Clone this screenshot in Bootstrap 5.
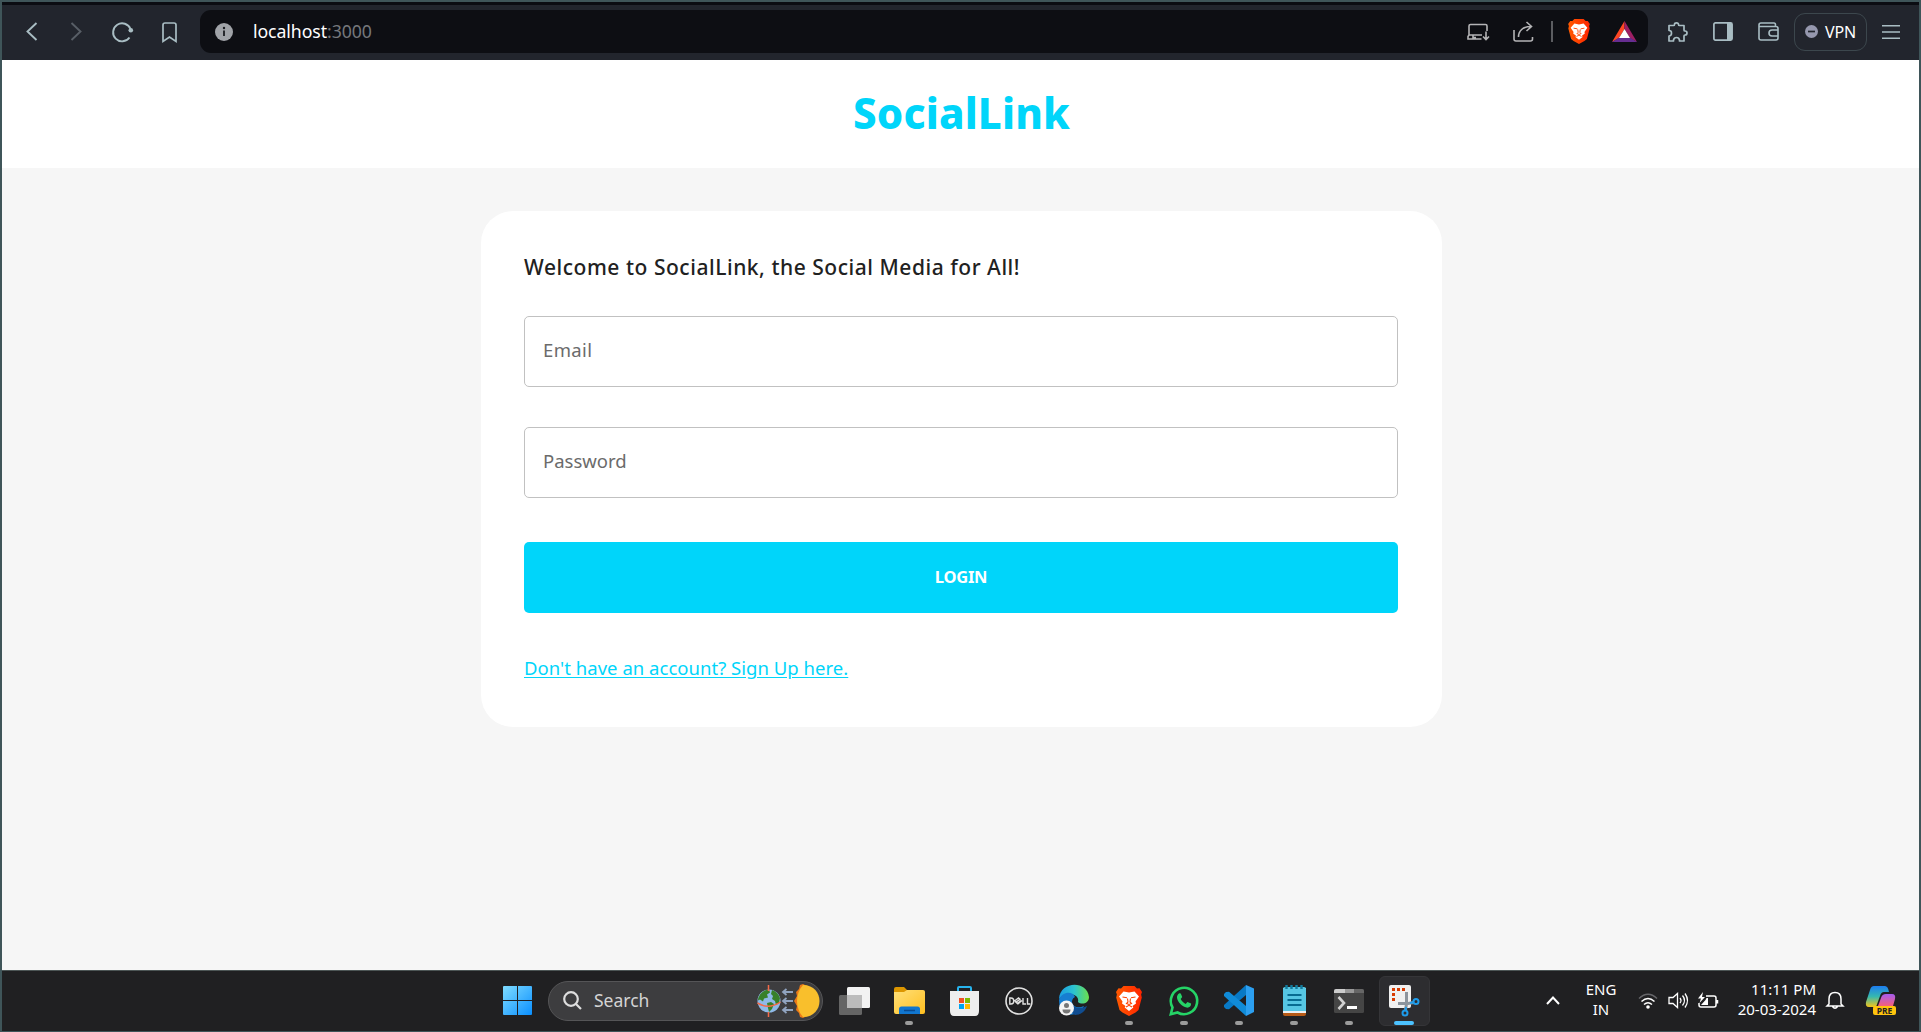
<!DOCTYPE html>
<html lang="en">
<head>
<meta charset="utf-8">
<meta name="viewport" content="width=device-width, initial-scale=1">
<title>SocialLink</title>
<link href="https://cdn.jsdelivr.net/npm/bootstrap@5.3.0/dist/css/bootstrap.min.css" rel="stylesheet">
<style>
html,body{height:100%;overflow:hidden}
body{font-family:"Noto Sans","Open Sans",sans-serif;border:2px solid #3f5559;border-bottom-width:1px;background:#f6f6f6}
svg{display:block;flex:none;overflow:visible}
.toolbar{height:58px;border-top:3px solid #0b0c12;background:#22252d;padding:0 0 2px 15px}
.tool{width:46px;height:44px;display:flex;align-items:center;justify-content:center;flex:none}
.omni{width:1448px;height:43px;margin-left:-1px;background:#0d0e13;border-radius:11px;padding:0 1px 0 15px}
.url{font-size:17.7px;letter-spacing:-.08px;margin-left:20px;color:#fff;line-height:1}
.url span{color:#75777c}
.vpn{width:73px;height:38px;border:1px solid #3c474d;border-radius:11px;color:#fff;font-size:16px;gap:7px;margin-left:3px;letter-spacing:-.2px}
.brandbar{height:108px}
.brandname{font-size:42px;font-weight:800;color:#00d5fa;line-height:1;letter-spacing:.15px;padding:0 0 2px 2px}
.page{padding-left:2px}
.panel{width:961px;height:516px;margin-top:43px;border-radius:32px;padding:0 44px 0 43px}
.panel h1{font-size:21px;font-weight:500;color:#212121;line-height:28px;margin:42px 0 35px;letter-spacing:.54px}
.form-control.fieldbox{height:71px;border:1px solid #c1c1c1;border-radius:5px;padding:0 18px 4px;font-size:18.5px}
.fieldbox::placeholder{color:#6b6b6b}
.fieldbox.mailbox{letter-spacing:.35px}
.fieldbox.pw{margin-top:40px}
.btn.login{height:71px;margin-top:44px;background:#00d5fa;color:#fff;border:0;border-radius:5px;font-size:16.5px;font-weight:700;letter-spacing:-.25px}
.signup{color:#00d5fa;font-size:18.5px;line-height:26px;margin-top:42px;text-underline-offset:2px;letter-spacing:.03px}
.taskbar{height:61px;border-top:1px solid #4c5555;background:#202022;color:#fff;padding-bottom:1px}
.search{width:275px;height:40px;border-radius:20px;background:#3d3d3f;border:1px solid #555557;font-size:17.5px;color:#d4d4d4;padding:0 3px 0 14px}
.app{width:55px;height:50px;position:relative;display:flex;align-items:center;justify-content:center;flex:none}
.running::after{content:"";position:absolute;bottom:1px;left:23.5px;width:8px;height:4px;border-radius:2px;background:#9b9b9b}
.current::before{content:"";position:absolute;inset:0 2px;border:1px solid #353538;border-radius:6px;background:#2d2d30}
.current svg{position:relative}
.current::after{left:17.5px;width:20px;background:#4cc2ff}
.tray{font-size:15px;line-height:20px}
.traytext{padding-bottom:3px}
</style>
</head>
<body class="d-flex flex-column">
<svg width="0" height="0" class="position-absolute"><defs>
<linearGradient id="win" x2="1" y2="1"><stop stop-color="#7fdcff"/><stop offset="1" stop-color="#0a8fff"/></linearGradient>
<linearGradient id="brv"><stop stop-color="#ff5a00"/><stop offset="1" stop-color="#ff2400"/></linearGradient>
<linearGradient id="edg"><stop stop-color="#1b9de2"/><stop offset=".5" stop-color="#2cc3d0"/><stop offset="1" stop-color="#6be04c"/></linearGradient>
<linearGradient id="cop" x2="0" y2="1"><stop stop-color="#1d7df0"/><stop offset=".5" stop-color="#35b8b0"/><stop offset="1" stop-color="#f5c518"/></linearGradient>
<linearGradient id="cop2" x2="0" y2="1"><stop stop-color="#a45cf0"/><stop offset="1" stop-color="#f5607a"/></linearGradient>
<linearGradient id="fold" x2="1" y2="1"><stop stop-color="#ffe07a"/><stop offset="1" stop-color="#ffbf1f"/></linearGradient>
<symbol id="lion" viewBox="0 0 26 30"><path d="M5 2.500 7.500 0h11L21 2.500l2.500-.2L26 6l-.9 2.500.7 3L22.500 24l-3 2.500L13 30l-6.500-3.500-3-2.500L.2 11.500l.7-3L0 6l2.500-3.700z" fill="url(#brv)"/><path d="M7.500 5.500l5.500 1 5.500-1L23 10.500l-3.500 5 .5 2-3.500 2.500.8 1.500L13 25l-4.300-3.500.8-1.500L6 17.500l.5-2-3.500-5z" fill="#fff"/><path d="M6.500 11l4.500.8M19.500 11l-4.500.8M11.500 12.500l.5 3.500-1.500 1.500 2.500 1 2.500-1-1.500-1.500.5-3.500M10 21l3-1.700 3 1.700" fill="none" stroke="#ff4200" stroke-width="1.100"/></symbol>
</defs></svg>

<nav class="toolbar d-flex align-items-center flex-shrink-0">
  <div class="tool" style="width:28px"><svg width="11" height="19" fill="none" stroke="#a9bdc3" stroke-width="1.900"><path d="M10.500 1 1.500 9.500l9 8.500"/></svg></div>
  <div class="tool" style="width:63px"><svg width="11" height="19" fill="none" stroke="#585e66" stroke-width="1.900"><path d="m.5 1 9 8.500-9 8.500"/></svg></div>
  <div class="tool" style="width:30px"><svg width="22" height="20" fill="none" stroke="#a9bdc3" stroke-width="1.900"><path d="M17.500 15.500A9 9 0 1 1 18.500 7"/><circle cx="18.800" cy="8.300" r="2.300" fill="#a9bdc3" stroke="none"/></svg></div>
  <div class="tool" style="width:63px"><svg width="15" height="20" fill="none" stroke="#a9bdc3" stroke-width="1.700"><path d="M3 1h9q2 0 2 2v16.500L7.500 15 1 19.500V3q0-2 2-2z"/></svg></div>
  <div class="omni d-flex align-items-center">
    <svg width="18" height="18"><circle cx="9" cy="9" r="9" fill="#a0a3a8"/><path d="M9 7.500V13" stroke="#191b20" stroke-width="1.800" fill="none"/><circle cx="9" cy="5" r="1.200" fill="#191b20"/></svg>
    <div class="url me-auto">localhost<span>:3000</span></div>
    <div class="tool" style="margin-right:-1px"><svg width="22" height="18" fill="none" stroke="#b4b4b6" stroke-width="1.600"><path d="M15 12H2V3q0-1.500 1.500-1.500h15Q20 1.500 20 3v5M2 12l-1 1.500V16h13.500M6 12.500v2h3M19 8.500V16M16 13.500l3 3 3-3"/></svg></div>
    <div class="tool"><svg width="21" height="21" fill="none" stroke="#b4b4b6" stroke-width="1.600"><path d="M1 9v9q0 2 2 2h14.500q2 0 2-2v-2M5.500 16c0-6 4-10.500 13-10.500M13.500 1 18.500 5.500 13.500 10"/></svg></div>
    <svg width="2" height="21" class="me-1" style="margin-left:5px"><path d="M1 0v21" stroke="#77797d" stroke-width="1.500"/></svg>
    <div class="tool" style="width:44px"><svg width="22" height="25"><use href="#lion"/></svg></div>
    <div class="tool"><svg width="25" height="21"><path d="M12.500 0 0 21l7-4 5.500-9z" fill="#ff4724"/><path d="M12.500 0v8L18 17l7 4z" fill="#9e1f63"/><path d="M0 21h25l-7-4.500H7z" fill="#662d91"/><path d="m12.500 8-5.500 9h11z" fill="#fff"/></svg></div>
  </div>
  <div class="tool" style="margin-left:6px"><svg width="21" height="20" fill="none" stroke="#a9bdc3" stroke-width="1.700" stroke-linejoin="round"><path d="M2 3.500h4.500q1 0 1-1 0-1.700 2-1.700t2 1.700q0 1 1 1H17v4.500q0 1 1 1 2 0 2 2t-2 2q-1 0-1 1V19h-4.500v-1q-.5-2.500-3-2.500t-3 2.500v1H2v-5q2.500 0 2.500-2.800T2 8.500z"/></svg></div>
  <div class="tool" style="width:45px"><svg width="20" height="19"><rect x=".9" y=".9" width="18.200" height="17.200" rx="1.500" fill="none" stroke="#a9bdc3" stroke-width="1.700"/><path d="M14 1h5v17h-5z" fill="#a9bdc3"/></svg></div>
  <div class="tool"><svg width="21" height="19" fill="none" stroke="#a9bdc3" stroke-width="1.600"><path d="M17.500 4.500V3Q17.500 1 16 1H3Q1 1 1 3v13q0 2 2 2h15q2 0 2-2V6.500q0-2-2-2H1M20 8h-6q-3 0-3 3t3 3h6"/></svg></div>
  <div class="vpn d-flex align-items-center justify-content-center"><svg width="13" height="13"><circle cx="6.500" cy="6.500" r="6.500" fill="#9698ae"/><path d="M3 6.500h7" stroke="#22252d" stroke-width="1.700"/></svg><span>VPN</span></div>
  <div class="tool" style="width:48px"><svg width="18" height="14" stroke="#a9bdc3" stroke-width="1.500"><path d="M0 .8h18M0 7h18M0 13.200h18"/></svg></div>
</nav>

<header class="brandbar bg-white d-flex justify-content-center align-items-center flex-shrink-0"><div class="brandname">SocialLink</div></header>

<main class="page flex-grow-1">
  <form class="panel bg-white mx-auto d-flex flex-column">
    <h1><span>Welcome to SocialLink, the Social Media for All!</span></h1>
    <input class="form-control fieldbox mailbox" type="text" placeholder="Email">
    <input class="form-control fieldbox pw" type="password" placeholder="Password">
    <button class="btn login w-100" type="button"><span>LOGIN</span></button>
    <div><a class="signup d-inline-block" href="#">Don't have an account? Sign Up here.</a></div>
  </form>
</main>

<footer class="taskbar d-flex align-items-center flex-shrink-0">
  <svg width="29" height="29" style="margin-left:501px"><path d="M0 1q0-1 1-1h13v14H0zM15 0h13q1 0 1 1v13H15zM0 15h14v14H1q-1 0-1-1zM15 15h14v13q0 1-1 1H15z" fill="url(#win)"/></svg>
  <div class="search d-flex align-items-center" style="margin-left:16px">
    <svg width="19" height="19" fill="none" stroke="#dedede" stroke-width="2.200"><circle cx="8" cy="8" r="6.800"/><path d="m13 13 5 5"/></svg>
    <span class="me-auto" style="margin-left:12px">Search</span>
    <svg width="63" height="34"><circle cx="13" cy="17" r="11.500" fill="#8fb9e8"/><path d="M4 10.500Q8 5.500 13 5.500l1 3-3 2 1 3-4 1-1 3-3-2-2 1q0-3 2-6zM16 6q6 2 8 8l-1 5-3 2-1-4-3-2 1-3-2-2zM11 19l4-1 3 2-2 5-3 3-1-4z" fill="#38802a"/><path d="M1.500 19q11 7 23-1M12.500 1v6M12.500 28v5" stroke="#f46b4a" stroke-width="1.500" fill="none"/><path d="M27 8h10M27 17h10M27 26h10M30.500 5 27 8l3.500 3M30.500 14 27 17l3.500 3M30.500 23 27 26l3.500 3" stroke="#91a4c0" stroke-width="1.800" fill="none"/><path d="m47 0-3 1-1 4-3 3 1 4-3 5 3 5-1 4 3 3 1 4 3 1 4-2V2z" fill="#ec7a17"/><path d="M47 1c22 0 22 32 0 32-8-9-8-23 0-32z" fill="#f9bf2c"/></svg>
  </div>
  <div class="app" style="margin-left:3.500px"><svg width="31" height="28"><rect x="8" y="0" width="23" height="21" rx="1.500" fill="#f2f2f2"/><rect x="0" y="8" width="23" height="20" rx="1.500" fill="#777" fill-opacity=".8"/><path d="M8 8h15v13H8z" fill="#bcbcbc"/></svg></div>
  <div class="app running"><svg width="31" height="27"><path d="M0 2q0-2 2-2h8l4 4h15q2 0 2 2v5H0z" fill="#dc9600"/><path d="M0 5h10l3-2h16q2 0 2 2v20q0 2-2 2H2q-2 0-2-2z" fill="url(#fold)"/><path d="M5 27v-5q0-2.500 2.500-2.500h16Q26 19.500 26 22v5z" fill="#1176cf"/><path d="M10 23.500h11" stroke="#084a91" stroke-width="1.500"/></svg></div>
  <div class="app"><svg width="29" height="30"><path d="M8 6V2q0-1 1-1h11q1 0 1 1v4" stroke="#27b3ed" stroke-width="2" fill="none"/><path d="M0 5h29v20q0 5-4 5H4q-4 0-4-5z" fill="#eee"/><path d="M9 12h5v5H9z" fill="#f25022"/><path d="M15 12h5v5h-5z" fill="#7fba00"/><path d="M9 18h5v5H9z" fill="#00a4ef"/><path d="M15 18h5v5h-5z" fill="#ffb900"/></svg></div>
  <div class="app"><svg width="28" height="28" fill="none" stroke="#e1e1e1"><circle cx="14" cy="14" r="13" stroke-width="1.600"/><path d="M4.800 11v6h1.200q2.800 0 2.800-3T6 11zM9.500 14l4-3 1.500 1.200-4 3 1.500 1.300 3.500-3M10 14l3 2.800 4-3.300M18 11v6h3M22.500 11v6h2.800" stroke-width="1.400"/></svg></div>
  <div class="app"><svg width="30" height="31"><path d="M0 14C1-4 28-5 30 12c0 7-8 8-11 5 2-8-11-11-19-3z" fill="url(#edg)"/><path d="M0 15c3-9 14-9 16-3-7 4-1 14 9 9-4 8-12 10-18 8Q0 26 0 15z" fill="#177ed1"/><path d="M13 17c1 7 9 7 15 4-2 6-7 9-12 9-5-3-6-8-3-13z" fill="#104d91"/><circle cx="7.500" cy="23" r="7.500" fill="#f5f5f5"/><circle cx="7.500" cy="20.500" r="2.500" fill="#777"/><path d="M3.500 24.500h8q0 4-4 4t-4-4z" fill="#777"/></svg></div>
  <div class="app running"><svg width="26" height="30"><use href="#lion"/></svg></div>
  <div class="app running"><svg width="30" height="30"><path d="M1.800 28.200 3.500 21.500A13.200 13.200 0 1 1 8.500 26.500z" fill="#202022" stroke="#25d366" stroke-width="2.600"/><path d="M10 7.500c1-.6 1.800 0 2.200 1l1 2.500-1.500 2c1 2.200 2.700 3.800 5 4.900l1.700-2 3.700 1.700c.2 3-2.100 4.400-4.500 4C13 20.500 9 16.500 8 12c-.2-2 .6-3.500 2-4.500z" fill="#25d366"/></svg></div>
  <div class="app running"><svg width="30" height="31"><path d="m22 0 8 3.500v23.500L22 31z" fill="#2c9ff0"/><path d="M22 0 0 20v2l2 2 3 .2L22 10z" fill="#0879c5"/><path d="M22 31 0 11V9l2-2 3-.2L22 21z" fill="#108bd8"/></svg></div>
  <div class="app running"><svg width="23" height="31"><path d="M0 4h23v25q0 2-2 2H2q-2 0-2-2z" fill="#b65a16"/><path d="M0 3h23v25H0z" fill="#eaf0f2"/><path d="M0 4q0-2 2-2h19q2 0 2 2v22H0z" fill="#56c6e3"/><path d="M4.500 10h14M4.500 15h14M4.500 20h14" stroke="#076b91" stroke-width="2"/><path d="M3.500 0v4M8.500 0v4M13.500 0v4M18.500 0v4" stroke="#127b9c" stroke-width="2.400"/></svg></div>
  <div class="app running"><svg width="30" height="24"><rect width="30" height="24" rx="1.500" fill="#454545"/><path d="M0 4V2q0-2 2-2h9v4H0z" fill="#ccc"/><path d="M11 0h9v4h-9z" fill="#999"/><path d="M20 0h8q2 0 2 2v2H20z" fill="#666"/><path d="m4.500 8 5.500 6-5.500 6" stroke="#d2d2d2" stroke-width="2.600" fill="none"/><path d="M13 18.500h10" stroke="#fff" stroke-width="3"/></svg></div>
  <div class="app running current"><svg width="30" height="31"><rect width="22" height="23" rx="2" fill="#f0f0f0"/><path d="M3 3h3v3H3zM8 3h3v3H8zM13 3h3v3h-3zM3 8h3v3H3zM3 13h3v3H3z" fill="#d83b01"/><path d="M17.500 7v12l-1 6M9 18.500h10l6-1" stroke="#8d949c" stroke-width="3" fill="none"/><circle cx="27" cy="16.500" r="2.500" fill="none" stroke="#1e9ceb" stroke-width="2"/><circle cx="16" cy="28" r="2.500" fill="none" stroke="#1e9ceb" stroke-width="2"/><path d="m21 18 4-1M17 22l-.5 3.500" stroke="#1e9ceb" stroke-width="2"/></svg></div>

  <div class="tray ms-auto d-flex align-items-center" style="margin-right:23px">
    <svg width="14" height="9" fill="none" stroke="#fff" stroke-width="2"><path d="m1 8 6-6.500L13 8"/></svg>
    <div class="traytext text-center" style="width:82px;margin-right:-4px">ENG<br>IN</div>
    <svg width="20" height="16" fill="none" stroke-width="1.500"><path d="M1 5.500q9-8.500 18 0" stroke="#66666a"/><path d="M3.500 8.500q6.500-6 13 0M6 11.500q4-3.500 8 0" stroke="#fff"/><circle cx="10" cy="14" r="1.800" fill="#fff"/></svg>
    <svg width="20" height="17" fill="none" stroke="#fff" stroke-width="1.300" style="margin-left:10px"><path d="M1 5.500h4l4.500-4v14L5 11.500H1zM12 6q2 2.500 0 5M14.500 3.500q4 5 0 10M17 1.500q5 7 0 14"/></svg>
    <svg width="20" height="17" fill="none" stroke="#fff" stroke-width="1.500" style="margin-left:10px"><path d="M8 4h8q2 0 2 2v7q0 2-2 2H3q-2 0-2-2v-2M19.500 8v3.500"/><path d="M8.500 6H10v7H3l4.500-5z" fill="#fff" stroke="none"/><path d="M5 0 0 6.500h3L1.500 11 7 5H4z" fill="#fff" stroke="none"/></svg>
    <div class="traytext text-end text-nowrap" style="width:98px">11:11 PM<br>20-03-2024</div>
    <svg width="18" height="19" fill="none" stroke="#fff" stroke-width="1.500" style="margin-left:10px"><path d="M3 13V8q0-6.500 6-6.500T15 8v5l2 2H1zM6.500 15.500q2.500 3.500 5 0"/></svg>
    <svg width="30" height="29" style="margin-left:22px"><path d="M8 0h11q3 0 4 6h-5q-3 0-4 4l-4 11H3q-4 0-3-5L4 4q1-4 4-4z" fill="url(#cop)"/><path d="M20 8h6q4 0 3 5l-2 7H12l3-8q1-4 5-4z" fill="url(#cop2)"/><rect x="7" y="20" width="23" height="9" rx="2" fill="#ffc40d"/><text x="18.500" y="27.700" text-anchor="middle" font-family="Noto Sans" font-weight="700" font-size="8.500" fill="#222">PRE</text></svg>
  </div>
</footer>
<script src="https://cdn.jsdelivr.net/npm/bootstrap@5.3.0/dist/js/bootstrap.bundle.min.js"></script>
</body>
</html>
